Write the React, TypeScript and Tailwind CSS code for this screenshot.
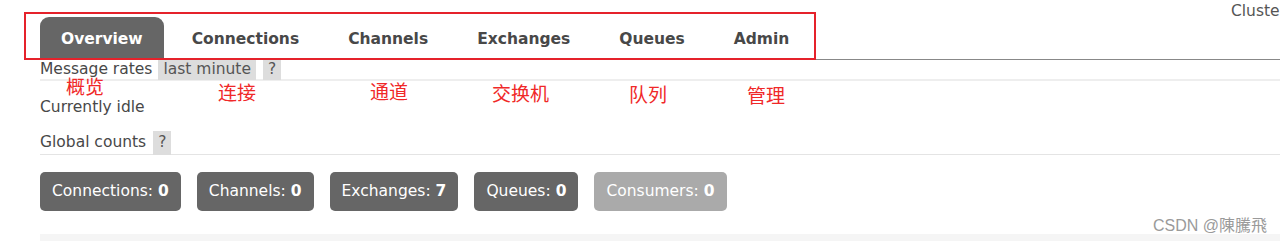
import React from 'react';

const tabs = ['Overview', 'Connections', 'Channels', 'Exchanges', 'Queues', 'Admin'];

// red annotations drawn over the screenshot
const notes = [
  { label: '概览', left: 'left-[66px]', top: 'top-[76px]' },
  { label: '连接', left: 'left-[218px]', top: 'top-[82px]' },
  { label: '通道', left: 'left-[370px]', top: 'top-[81px]' },
  { label: '交换机', left: 'left-[492px]', top: 'top-[83px]' },
  { label: '队列', left: 'left-[629px]', top: 'top-[84px]' },
  { label: '管理', left: 'left-[747px]', top: 'top-[85px]' },
];

const counts = [
  { label: 'Connections', value: 0, muted: false },
  { label: 'Channels', value: 0, muted: false },
  { label: 'Exchanges', value: 7, muted: false },
  { label: 'Queues', value: 0, muted: false },
  { label: 'Consumers', value: 0, muted: true },
];

function Help() {
  return <span className="ml-[7px] inline-flex h-[24px] items-center bg-[#dddddd] px-[5px] text-[#555]">?</span>;
}

export default function App() {
  return (
    <div className="relative h-[241px] w-[1280px] overflow-hidden bg-white text-[15.5px] text-[#484848] [font-family:'DejaVu_Sans',Verdana,sans-serif]">
      {/* header */}
      <div className="flex h-[60px] justify-between pl-[40px]">
        <ul className="flex items-end gap-[7px] self-end border-b border-[#666]">
          {tabs.map((t, i) => (
            <li
              key={t}
              className={`flex h-[42px] items-center px-[21px] pt-[3px] font-bold ${
                i === 0 ? 'rounded-t-[9px] bg-[#666] text-white' : 'text-[#484848]'
              }`}
            >
              {t}
            </li>
          ))}
        </ul>
        <div className="flex-1 self-end border-b border-[#888]" />
        <div className="absolute right-[-6px] top-[0px] text-[#555]">Cluster</div>
      </div>

      <div className="pl-[40px]">
        <div className="flex h-[21px] items-center border-b-2 border-[#eeeeee]">
          <span>Message rates</span>
          <span className="ml-[6px] flex h-[20px] items-center bg-[#dddddd] px-[5px] text-[#555]">last minute</span>
          <span className="ml-[7px] flex h-[20px] items-center bg-[#dddddd] px-[5px] text-[#555]">?</span>
        </div>
        <div className="flex h-[48px] items-center pt-[6px]">Currently idle</div>
        <div className="flex h-[26px] items-center border-b border-[#e4e4e4] pt-[2px]">
          <span>Global counts</span>
          <Help />
        </div>
        <div className="mt-[17px] flex gap-[16px]">
          {counts.map((c) => (
            <div
              key={c.label}
              className={`flex h-[39px] items-center rounded-[5px] px-[12px] text-white ${
                c.muted ? 'bg-[#aaaaaa]' : 'bg-[#666666]'
              }`}
            >
              {c.label}: <b className="ml-[5px]">{c.value}</b>
            </div>
          ))}
        </div>
        <div className="mt-[23px] h-[10px] bg-[#f5f5f5]" />
      </div>

      {/* annotation overlay */}
      <div className="pointer-events-none absolute left-[24px] top-[12px] h-[48px] w-[792px] border-2 border-[#e5222b]" />
      {notes.map((n) => (
        <div
          key={n.label}
          className={`absolute ${n.left} ${n.top} text-[19px] leading-[19px] text-[#f02828] [font-family:'Noto_Sans_CJK_SC',sans-serif]`}
        >
          {n.label}
        </div>
      ))}
      <div className="absolute left-[1153px] top-[214px] text-[16px] text-[#9a9a9a] [font-family:'Liberation_Sans','Noto_Sans_CJK_TC',sans-serif]">
        CSDN @陳騰飛
      </div>
    </div>
  );
}
